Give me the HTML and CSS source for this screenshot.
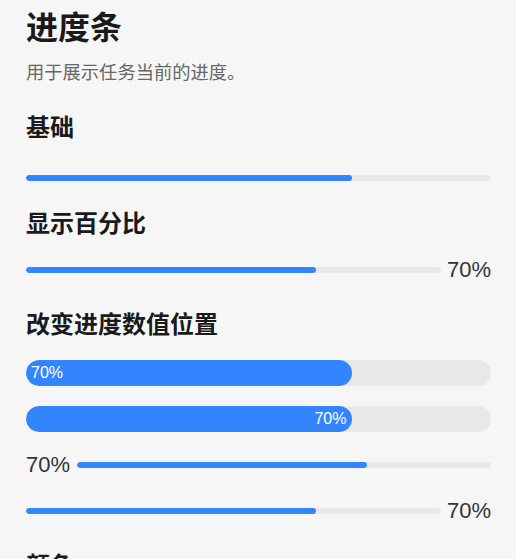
FILE: index.html
```html
<!DOCTYPE html>
<html lang="zh-CN">
<head>
  <meta charset="UTF-8" />
  <meta name="viewport" content="width=device-width, initial-scale=1.0" />
  <title>进度条</title>
  <link rel="stylesheet" href="styles.css">
</head>
<body>
  <div class="page">
    <h1>进度条</h1>
    <p class="desc">用于展示任务当前的进度。</p>

    <div class="section section-basic">
      <h2>基础</h2>
      <div class="demo">
        <div class="row">
          <div class="track"><div class="fill" style="width: 70%"></div></div>
        </div>
      </div>
    </div>

    <div class="section section-percent">
      <h2>显示百分比</h2>
      <div class="demo">
        <div class="row">
          <div class="track"><div class="fill" style="width: 70%"></div></div>
          <span class="value value-right">70%</span>
        </div>
      </div>
    </div>

    <div class="section">
      <h2>改变进度数值位置</h2>
      <div class="demo">
        <div class="track track-large">
          <div class="fill fill-large" style="width: 70%"><span class="inner">70%</span></div>
        </div>
        <div class="track track-large">
          <div class="fill fill-large fill-end" style="width: 70%"><span class="inner">70%</span></div>
        </div>
        <div class="row">
          <span class="value value-left">70%</span>
          <div class="track"><div class="fill" style="width: 70%"></div></div>
        </div>
        <div class="row">
          <div class="track"><div class="fill" style="width: 70%"></div></div>
          <span class="value value-right">70%</span>
        </div>
      </div>
    </div>

    <div class="section">
      <h2>颜色</h2>
      <div class="demo">
        <div class="row">
          <div class="track"><div class="fill fill-green" style="width: 40%"></div></div>
        </div>
      </div>
    </div>
  </div>
</body>
</html>
```

FILE: styles.css
```css
body {
  margin: 0;
  background-color: #f6f6f7;
  font-family: "Liberation Sans", "Noto Sans CJK SC", sans-serif;
  color: #1a1a1a;
}
.page {
  padding: 3px 25px 40px 26px;
}
h1 {
  margin: 0;
  font-family: "Noto Sans CJK SC", sans-serif;
  font-size: 32px;
  line-height: 44px;
  font-weight: 700;
}
.desc {
  margin: 11px 0 0;
  font-family: "Noto Sans CJK SC", sans-serif;
  font-size: 18.3px;
  line-height: 26px;
  color: #666;
}
.section {
  margin-top: 22px;
}
.section h2 {
  margin: 0;
  font-family: "Noto Sans CJK SC", sans-serif;
  font-size: 24px;
  line-height: 36px;
  font-weight: 700;
}
.demo {
  display: flex;
  flex-direction: column;
  gap: 20px;
  margin-top: 19px;
}
.section-basic {
  margin-top: 24px;
}
.section-basic .demo {
  margin-top: 21px;
}
.section-percent {
  margin-top: 13px;
}
.section-percent .demo {
  margin-top: 17px;
}
.row {
  display: flex;
  align-items: center;
  height: 26px;
}
.track {
  flex: 1;
  height: 6px;
  border-radius: 3px;
  background-color: #e8e8e8;
  overflow: hidden;
}
.fill {
  height: 100%;
  border-radius: 3px;
  background-color: #3385ff;
}
.fill-green {
  background-color: #2fbf71;
}
.track-large {
  flex: none;
  height: 26px;
  border-radius: 13px;
}
.fill-large {
  display: flex;
  align-items: center;
  border-radius: 13px;
  padding: 0 5px;
  box-sizing: border-box;
}
.fill-end {
  justify-content: flex-end;
}
.inner {
  color: #fff;
  font-size: 16px;
  line-height: 26px;
}
.value {
  font-size: 22px;
  line-height: 26px;
  color: #333;
  white-space: nowrap;
}
.value-right {
  margin-left: 6px;
}
.value-left {
  margin-right: 7px;
}
```
